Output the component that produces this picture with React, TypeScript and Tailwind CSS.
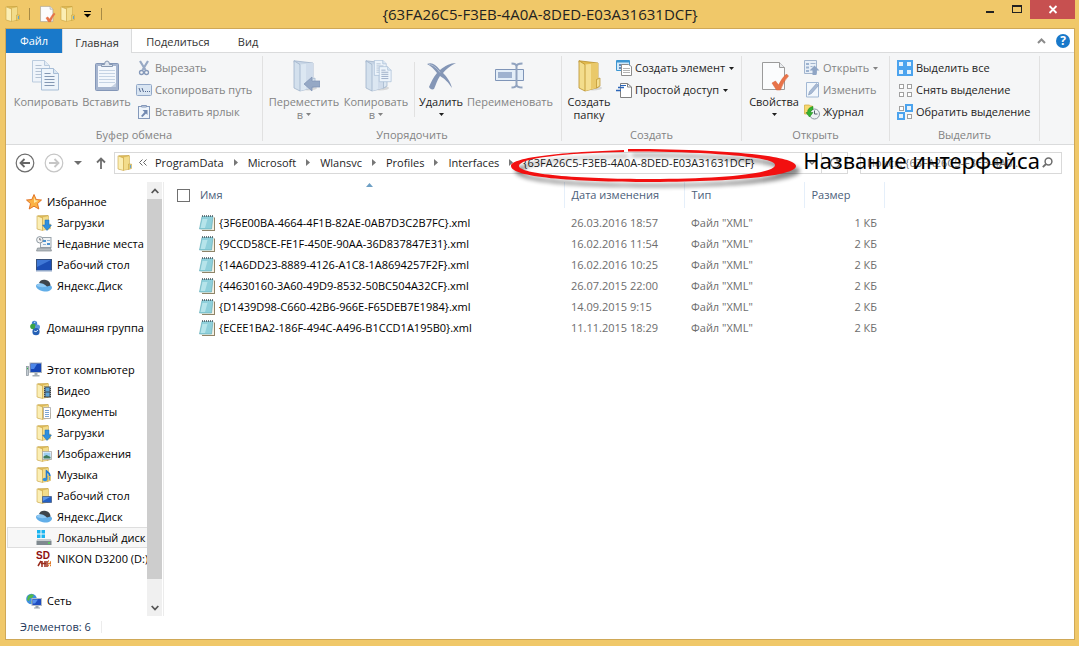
import React from 'react';

type IconProps = { className?: string };

const Folder: React.FC<IconProps & { children?: React.ReactNode }> = ({ className = 'size-4', children }) => (
  <svg viewBox="0 0 16 16" className={`shrink-0 ${className}`}>
    <path d="M2 .8 12 .5V14H2z" fill="#e3bf5c" stroke="#c09a35" strokeWidth=".6" />
    <path d="M6.5 2 12.500 .8V14l-6 1.5z" fill="#f3dc8a" stroke="#c9a443" strokeWidth=".4" />
    <path d="M1 .8 6.5 3v12.5L1 14z" fill="#fbeeb4" stroke="#c9a443" strokeWidth=".6" />
    <path d="M11.5 9H14.500v4.5l-3 1z" fill="#ecce70" stroke="#b9922c" strokeWidth=".4" />
    <path d="M13.4 10v3" stroke="#4a9bdc" strokeWidth=".9" />
    {children}
  </svg>
);

const BigFolder: React.FC<{ disabled?: boolean; children?: React.ReactNode }> = ({ disabled, children }) => {
  const c = disabled
    ? { back: '#c8d6e6', front: '#dce7f2', side: '#d3e0ed', line: '#9fb3ca' }
    : { back: '#e2bb50', front: '#f5df92', side: '#f3dd8c', line: '#b98f2a' };
  return (
    <svg viewBox="0 0 32 32" className="size-8">
      <ellipse cx="20" cy="28" rx="9" ry="2.5" fill="#000" opacity=".12" />
      <path d="M6 .8 25 3v24.5L12 31z" fill={c.back} stroke={c.line} strokeWidth=".8" />
      <path d="M12 4.5 25 3v24.5L12 31z" fill={c.front} />
      <path d="M18 4v25l7-1.5V3z" fill={c.back} opacity=".6" />
      <path d="M6 .8 12 4.5V31l-6-3z" fill={c.side} stroke={c.line} strokeWidth=".8" />
      <path d="M23.5 19.5 27 18v8l-3.5 2z" fill={c.front} stroke={c.line} strokeWidth=".7" />
      {children}
    </svg>
  );
};

const Sheet = ({ x, y, lines = '#9fb1c8' }: { x: number; y: number; lines?: string }) => (
  <g transform={`translate(${x} ${y})`}>
    <path d="M.5 .5h12l5 5V22H.5z" fill="#edf4fb" stroke="#a7bdd6" />
    <path d="M12.5 .5v5h5" fill="#dbe7f3" stroke="#a7bdd6" />
    <path d="M3.5 8.5h10M3.5 11.5h10M3.5 14.5h10M3.5 17.5h10M3.5 5.5h6" stroke={lines} />
  </g>
);

const CopyIcon = () => (
  <svg viewBox="0 0 32 32" className="size-8">
    <g opacity=".75"><Sheet x={2} y={0} /></g>
    <Sheet x={11} y={8} lines="#8397b3" />
  </svg>
);

const PasteIcon = () => (
  <svg viewBox="0 0 32 32" className="size-8">
    <rect x="4.5" y="3.5" width="23" height="27" rx="1" fill="#a6b5cf" stroke="#8497b8" />
    <path d="M7 6h18v21H7z" fill="#f3f7fc" />
    <path d="M8 10.5h16M8 13.5h16M8 16.5h16M8 19.5h16M8 22.5h16" stroke="#c5d3e4" />
    <path d="M10.5 6.5v-2h3q0-3.5 2.5-3.5t2.5 3.5h3v2z" fill="#dfe6ef" stroke="#8798b2" />
    <path d="M20 27l5-4v4z" fill="#c6d2e3" />
  </svg>
);

const DeleteIcon = () => (
  <svg viewBox="0 0 32 32" className="size-8">
    <path d="M2 4c5-2 8 0 13 6C20 6 25 3 31 3c-6 3-10 6-13 10 4 4 7 8 9 15-4-6-7-9-12-12-3 4-4 9-6 13-2 1-4 0-5-2 2-5 4-9 8-14C9 9 6 6 2 4z" fill="#8496b6" />
    <path d="M4 4.5c4 0 8 4 11 8" stroke="#b4c1d5" fill="none" />
  </svg>
);

const RenameIcon = () => (
  <svg viewBox="0 0 32 32" className="size-8">
    <path d="M1.5 9.5h28v11h-28z" fill="#e4eef8" stroke="#7f95b8" />
    <path d="M4 12h14v6H4z" fill="#9fb2cf" />
    <path d="M17.5 3.5q5 0 5 3v18q0 3-5 3M28.5 3.5q-6 0-6 3M22.5 24.5q0 3 6 3" fill="none" stroke="#91a3bf" strokeWidth="2" />
  </svg>
);

const PropertiesIcon: React.FC<IconProps> = ({ className = 'size-8' }) => (
  <svg viewBox="0 0 32 32" className={className}>
    <path d="M4.5 2.5h17l5 5v22h-22z" fill="#fbfcfd" stroke="#9b9b9b" />
    <path d="M21.5 2.5v5h5" fill="#e9ecef" stroke="#9b9b9b" />
    <path d="M14 23l3.5-2 3 4q4-8 8-11l2 2q-5 5-8 14h-4z" fill="#e8744a" stroke="#d65f35" strokeWidth=".5" />
  </svg>
);

const CutIcon = () => (
  <svg viewBox="0 0 16 16" className="size-4">
    <path d="M4 1l5.5 9M12 1L6.5 10" stroke="#98a9c4" strokeWidth="2.2" fill="none" />
    <circle cx="5.5" cy="12.5" r="2" fill="none" stroke="#8599ba" strokeWidth="1.3" />
    <circle cx="10.5" cy="12.5" r="2" fill="none" stroke="#8599ba" strokeWidth="1.3" />
  </svg>
);

const PathIcon = () => (
  <svg viewBox="0 0 16 16" className="size-4">
    <rect x=".5" y="2.5" width="15" height="11" rx="1" fill="#d9e5f2" stroke="#92a8c8" />
    <path d="M3 6l1.5 4M6 6l1.5 4" stroke="#51678e" />
    <path d="M9 9.5h1M11 9.5h1M13 9.5h1" stroke="#51678e" />
  </svg>
);

const ShortcutIcon = () => (
  <svg viewBox="0 0 16 16" className="size-4">
    <rect x="2.5" y="2.5" width="11" height="12" fill="#eff5fb" stroke="#8499bb" />
    <path d="M5.5 3V1.5h5V3z" fill="#dfe6ef" stroke="#8499bb" />
    <path d="M6.5 6h5v5L10 9.5 6.5 13 5 12l3.5-4z" fill="#7189b1" />
  </svg>
);

const NewItemIcon = () => (
  <svg viewBox="0 0 16 16" className="size-4">
    <path d="M.5 .5h13v10H.5z" fill="#d3e9f8" stroke="#3d96d2" />
    <path d="M1 1.5h12" stroke="#3d96d2" strokeWidth="2" />
    <path d="M3 5h3M3 8h2" stroke="#3d6ea8" strokeWidth="1.5" />
    <path d="M5.5 4.5h7l3 2v9h-10z" fill="#fff" stroke="#8c8c8c" />
    <path d="M7 8.5h7M7 10.5h7M7 12.5h7" stroke="#b3b3b3" />
  </svg>
);

const EasyAccessIcon = () => (
  <svg viewBox="0 0 16 16" className="size-4">
    <path d="M4.5 1.5h7l4 3.5v10.5h-11z" fill="#fff" stroke="#808080" />
    <path d="M11.5 1.5V5h4" fill="none" stroke="#808080" />
    <path d="M4 3.5h6" stroke="#2c66b8" />
    <path d="M2 5.5h6M0 8.5h5" stroke="#2c66b8" strokeWidth="1.4" />
  </svg>
);

const OpenIcon = () => (
  <svg viewBox="0 0 16 16" className="size-4">
    <path d="M.5 .5h12v13H.5z" fill="#e8eff7" stroke="#a2b5ce" />
    <path d="M2 3h3v2H2zM2 6.5h3v2H2zM2 10h3v2H2z" fill="#9db3d0" />
    <path d="M6.5 3.5h5M6.5 6.5h2" stroke="#a2b5ce" />
    <path d="M10.5 5.5l5 5h-3V15h-4v-4.5h-3z" fill="#8fa5c5" />
  </svg>
);

const EditIcon = () => (
  <svg viewBox="0 0 16 16" className="size-4">
    <path d="M2.5 .5h12V15h-12z" fill="#f2f7fc" stroke="#a2b8d4" />
    <path d="M4.5 13l1-3.5 7-8 2 2-7 8z" fill="#a8bad4" stroke="#8399bb" strokeWidth=".6" />
  </svg>
);

const HistoryIcon = () => (
  <svg viewBox="0 0 16 16" className="size-4">
    <path d="M.5 1h5l1 1h2v8h-8z" fill="#f7d970" stroke="#d1a83a" strokeWidth=".7" />
    <circle cx="10.5" cy="10" r="5" fill="#eef1f4" stroke="#8b95a0" />
    <path d="M10.5 6.5V10h3" fill="none" stroke="#57626e" />
    <path d="M9 2.5v3q-2.5 1-2.5 3H9L5.5 13 2 8.5h1.5q0-5 5.5-6z" fill="#34b233" stroke="#188018" strokeWidth=".5" />
  </svg>
);

const SelectIcon = ({ picked }: { picked: boolean[] }) => (
  <svg viewBox="0 0 16 16" className="size-4">
    {picked.map((on, i) => {
      const x = (i % 2) * 8;
      const y = i < 2 ? 0 : 8;
      return on ? (
        <g key={i}>
          <rect x={x} y={y} width="8" height="8" fill="#4ba3ee" />
          <rect x={x + 2} y={y + 2} width="4" height="4" fill="#e3f1fc" />
        </g>
      ) : (
        <rect key={i} x={x + 2.5} y={y + 2.5} width="4" height="4" fill="#fff" stroke="#a0a0a0" />
      );
    })}
  </svg>
);

const Caret: React.FC<IconProps> = ({ className = '' }) => (
  <svg viewBox="0 0 5 3" className={`inline-block h-[3px] w-[5px] ${className}`}>
    <path d="M0 0h5L2.5 3z" fill="currentColor" />
  </svg>
);

const StarIcon = () => (
  <svg viewBox="0 0 16 16" className="size-4">
    <path d="M8 .5l2.2 5 5.3 .5-4 3.6 1.3 5.4L8 12.2 3.2 15l1.3-5.4L.5 6l5.3-.5z" fill="#fbb245" stroke="#df6b1c" strokeWidth=".9" />
    <path d="M8 3l1.3 3.3 3 .4L8 9z" fill="#ffe7a6" />
  </svg>
);

const RecentIcon = () => (
  <svg viewBox="0 0 16 16" className="size-4">
    <rect x="4.5" y="1.5" width="10.5" height="10" fill="#f0f3f5" stroke="#9aa4ac" />
    <path d="M7 4h3v2H7zM11 7h3v2h-3z" fill="#4a91cf" />
    <path d="M7 8.5h3M11 4.5h3" stroke="#8eb3d4" />
    <path d="M1.5 12h13l1 3H.5z" fill="#b4babf" stroke="#82898f" strokeWidth=".7" />
    <circle cx="3.8" cy="3.8" r="3.2" fill="#f4f4f4" stroke="#8f9aa3" />
    <path d="M3.8 2v2h1.5" fill="none" stroke="#555" strokeWidth=".8" />
  </svg>
);

const DesktopIcon = () => (
  <svg viewBox="0 0 16 16" className="size-4">
    <rect x=".5" y="2.5" width="15" height="11" fill="#1c4fb5" stroke="#39527b" />
    <path d="M1 3h14L1 10z" fill="#3f78d6" />
    <path d="M0 13h16v1.5H0z" fill="#91a7c8" />
  </svg>
);

const YandexIcon = () => (
  <svg viewBox="0 0 16 16" className="size-4">
    <path d="M0 8c0-2 4-3 8-2.5s8 2 8 4-3 4.5-7.5 4S0 10.5 0 8z" fill="#62aee8" />
    <path d="M.5 7.5C1 5.500 5 5 9 6.5l2 2C9 9.500 2 9.500 .5 7.500z" fill="#8fc8f2" />
    <path d="M3 5C4 2 7 1 10 2c3 .8 4.500 3 4.500 5.500L11 8.500C9 6 5.500 5 3 5z" fill="#3d444b" />
  </svg>
);

const HomegroupIcon = () => (
  <svg viewBox="0 0 16 16" className="size-4">
    <circle cx="8.500" cy="3.5" r="2.7" fill="#3f83cf" />
    <circle cx="7" cy="6.5" r="2.8" fill="#3aa345" />
    <circle cx="11.5" cy="7" r="2.5" fill="#5b94dc" />
    <circle cx="10" cy="11.7" r="3.6" fill="#2560b5" />
    <path d="M8 2.5l1.5-.5M8 11q2 2 4-1" fill="none" stroke="#cfe4f7" />
  </svg>
);

const ComputerIcon = () => (
  <svg viewBox="0 0 16 16" className="size-4">
    <rect x=".5" y="4.5" width="2" height="9" fill="#c4ccd2" stroke="#87919a" strokeWidth=".7" />
    <path d="M1 6.5h1" stroke="#37b34a" strokeWidth="1.5" />
    <rect x="4" y="1" width="11.5" height="9.5" fill="#1647b8" stroke="#aab4bd" />
    <path d="M5 2h6L8 7H5z" fill="#4c86e9" />
    <path d="M8.5 11h3v2h2v1.5h-7V13h2z" fill="#a4adb4" />
  </svg>
);

const DiskIcon = () => (
  <svg viewBox="0 0 16 16" className="size-4">
    <path d="M1 0h3.5v3.5H1zM5.5 0H9v3.5H5.500zM1 4.5h3.5V8H1zM5.5 4.5H9V8H5.5z" fill="#18b4f0" />
    <path d="M2 9h12l1.5 2v4H.5v-4z" fill="#7f898f" />
    <path d="M2 9h12l1.5 2H.5z" fill="#c5cbce" />
    <path d="M12 13h2" stroke="#4ce04c" strokeWidth="1.5" />
  </svg>
);

const SdIcon = () => (
  <svg viewBox="0 0 16 16" className="size-4">
    <text x="0" y="8" fontSize="10" fontWeight="700" fontFamily="Liberation Sans" fill="#8e1010">SD</text>
    <path d="M2 15l3-5M6 10v6M9 10v6M5 12.5h5M11 10v6" stroke="#9a2b1b" strokeWidth="1.5" />
    <path d="M12 10h1M14 11h1M12 12.5h3M12 14.5h1M14 14.5h1" stroke="#e07a28" strokeWidth="1.3" />
  </svg>
);

const NetworkIcon = () => (
  <svg viewBox="0 0 16 16" className="size-4">
    <circle cx="5.5" cy="6" r="5.3" fill="#3f8ee0" />
    <path d="M2 3q3-3 6-1L6 5H4L3 8 1 7zM5 8l3 1-2 2z" fill="#54b947" />
    <rect x="6" y="5.5" width="9.5" height="7" fill="#1e4cc0" stroke="#b2bcc7" />
    <path d="M7 6.5h5l-3 4H7z" fill="#5590ee" />
    <path d="M9.5 13h3v1.5H14v1H8v-1h1.5z" fill="#98a2ab" />
  </svg>
);

const NotepadIcon = () => (
  <svg viewBox="0 0 16 16" className="size-4 shrink-0">
    <path d="M4 2.5h12V16H3z" fill="#8f8468" />
    <path d="M3.5 2H15v13H2z" fill="#f4f1e4" />
    <path d="M3 1.5h11L12.5 14H.5z" fill="#8fd0db" stroke="#5ba8b6" strokeWidth=".6" />
    <path d="M3.5 4h5L6 13H1.5z" fill="#c6ecf1" opacity=".7" />
    <path d="M3 1h11.5" stroke="#44535a" strokeWidth="1.5" strokeDasharray="1 1" />
  </svg>
);

interface BigButtonProps {
  icon: React.ReactNode;
  lines: string[];
  width: string;
  disabled?: boolean;
  menu?: boolean;
}

const BigButton: React.FC<BigButtonProps> = ({ icon, lines, width, disabled, menu }) => (
  <button
    type="button"
    disabled={disabled}
    className={`flex shrink-0 flex-col items-center whitespace-nowrap leading-[13px] ${width} ${disabled ? 'text-[#838383]' : 'text-[#1e1e1e]'}`}
  >
    <span className="mb-[3px] block">{icon}</span>
    <span>{lines[0]}</span>
    {(lines[1] || menu) && (
      <span className="flex h-[13px] items-center gap-[3px]">
        {lines[1]}
        {menu && <Caret />}
      </span>
    )}
  </button>
);

interface SmallButtonProps {
  icon: React.ReactNode;
  label: string;
  disabled?: boolean;
  menu?: boolean;
}

const SmallButton: React.FC<SmallButtonProps> = ({ icon, label, disabled, menu }) => (
  <button
    type="button"
    disabled={disabled}
    className={`flex h-[22px] items-center gap-[3px] whitespace-nowrap ${disabled ? 'text-[#838383]' : 'text-[#1e1e1e]'}`}
  >
    {icon}
    <span>{label}</span>
    {menu && <Caret className="ml-px" />}
  </button>
);

const Group: React.FC<{ title: string; width: string; children: React.ReactNode }> = ({ title, width, children }) => (
  <section className={`flex shrink-0 flex-col border-r border-[#e1e1e1] ${width}`}>
    <div className="flex flex-1">{children}</div>
    <h2 className="text-center leading-3 text-[#838383]">{title}</h2>
  </section>
);

const Ribbon = () => (
  <div className="border-b border-[#dadbdc] bg-[#f5f6f7]">
    <div className="flex h-[91px] overflow-hidden py-[3px]">
      <Group title="Буфер обмена" width="w-[257px]">
        <div className="flex pt-1 pl-[7px]">
          <BigButton icon={<CopyIcon />} lines={['Копировать']} width="w-[66px]" disabled />
          <BigButton icon={<PasteIcon />} lines={['Вставить']} width="w-[55px]" disabled />
        </div>
        <div className="pt-px pl-0.5">
          <SmallButton icon={<CutIcon />} label="Вырезать" disabled />
          <SmallButton icon={<PathIcon />} label="Скопировать путь" disabled />
          <SmallButton icon={<ShortcutIcon />} label="Вставить ярлык" disabled />
        </div>
      </Group>

      <Group title="Упорядочить" width="w-[299px]">
        <div className="flex pt-1 pl-[5px]">
          <BigButton
            icon={
              <BigFolder disabled>
                <path d="M16 24l8-7v4h8v6h-8v4z" fill="#95a8c5" stroke="#7f94b5" strokeWidth=".7" />
              </BigFolder>
            }
            lines={['Переместить', 'в']}
            width="w-[72px]"
            disabled
            menu
          />
          <BigButton
            icon={
              <BigFolder disabled>
                <g transform="translate(14 0) scale(.7)">
                  <Sheet x={0} y={0} />
                  <Sheet x={7} y={9} lines="#7f94b5" />
                </g>
              </BigFolder>
            }
            lines={['Копировать', 'в']}
            width="w-[72px]"
            disabled
            menu
          />
        </div>
        <div className="mt-1.5 mr-[3px] ml-0.5 h-[55px] border-l border-[#e1e1e1]" />
        <div className="flex pt-1">
          <BigButton icon={<DeleteIcon />} lines={['Удалить']} width="w-[46px]" menu />
          <BigButton icon={<RenameIcon />} lines={['Переименовать']} width="w-[92px]" disabled />
        </div>
      </Group>

      <Group title="Создать" width="w-[180px]">
        <div className="pt-1">
          <BigButton icon={<BigFolder />} lines={['Создать', 'папку']} width="w-[54px]" />
        </div>
        <div className="pt-px">
          <SmallButton icon={<NewItemIcon />} label="Создать элемент" menu />
          <SmallButton icon={<EasyAccessIcon />} label="Простой доступ" menu />
        </div>
      </Group>

      <Group title="Открыть" width="w-[148px]">
        <div className="pt-1 pl-1">
          <BigButton icon={<PropertiesIcon />} lines={['Свойства']} width="w-[56px]" menu />
        </div>
        <div className="pt-px pl-0.5">
          <SmallButton icon={<OpenIcon />} label="Открыть" disabled menu />
          <SmallButton icon={<EditIcon />} label="Изменить" disabled />
          <SmallButton icon={<HistoryIcon />} label="Журнал" />
        </div>
      </Group>

      <Group title="Выделить" width="w-[150px]">
        <div className="pt-px pl-[7px]">
          <SmallButton icon={<SelectIcon picked={[true, true, true, true]} />} label="Выделить все" />
          <SmallButton icon={<SelectIcon picked={[false, false, false, false]} />} label="Снять выделение" />
          <SmallButton icon={<SelectIcon picked={[false, true, true, false]} />} label="Обратить выделение" />
        </div>
      </Group>
    </div>
  </div>
);

const TitleBar = () => (
  <header className="grid h-7 grid-cols-[1fr_auto_1fr]">
    <div className="flex items-center">
      <Folder className="size-4" />
      <span className="ml-2 h-3 border-l border-[#a78a45]" />
      <button type="button" aria-label="Свойства" className="ml-2"><PropertiesIcon className="size-[18px]" /></button>
      <button type="button" aria-label="Создать папку" className="ml-1"><Folder className="size-4" /></button>
      <button type="button" aria-label="Настройка панели быстрого доступа" className="ml-2">
        <svg viewBox="0 0 7 7" className="h-[7px] w-[7px]"><path d="M0 .5h7" stroke="#000" /><path d="M0 3h7L3.5 6.5z" /></svg>
      </button>
      <span className="ml-2.5 h-3 border-l border-[#a78a45]" />
    </div>
    <h1 className="text-[15px] leading-7 text-[#222]">{'{63FA26C5-F3EB-4A0A-8DED-E03A31631DCF}'}</h1>
    <div className="flex items-start justify-end">
      <button type="button" aria-label="Свернуть" className="h-[19px] w-7">
        <svg viewBox="0 0 28 19" className="h-[19px] w-7"><path d="M12 11h8v2h-8z" fill="#222" /></svg>
      </button>
      <button type="button" aria-label="Развернуть" className="h-[19px] w-7">
        <svg viewBox="0 0 28 19" className="h-[19px] w-7"><path d="M10 5h10v8H10zM11 7v5h8V7z" fill="#222" fillRule="evenodd" /></svg>
      </button>
      <button type="button" aria-label="Закрыть" className="h-[19px] w-[45px] bg-[#c75050]">
        <svg viewBox="0 0 45 19" className="h-[19px] w-[45px]"><path d="M19.5 6l7 7M26.5 6l-7 7" stroke="#fff" strokeWidth="1.8" /></svg>
      </button>
    </div>
  </header>
);

const Tabs = () => (
  <nav className="flex h-6 items-stretch bg-white text-[#333]">
    <button type="button" className="w-14 bg-[#1979ca] text-white">Файл</button>
    <button type="button" className="-mb-px w-[70px] border-x border-[#dadbdc] bg-[#f5f6f7] pt-0.5">Главная</button>
    <button type="button" className="w-[92px] border-b border-[#dadbdc] pt-0.5">Поделиться</button>
    <button type="button" className="w-12 border-b border-[#dadbdc] pt-0.5">Вид</button>
    <div className="flex flex-1 items-center justify-end gap-2.5 border-b border-[#dadbdc] pr-1">
      <button type="button" aria-label="Свернуть ленту">
        <svg viewBox="0 0 9 6" className="h-1.5 w-[9px]"><path d="M1 5l3.5-3.5L8 5" fill="none" stroke="#8b8b8b" strokeWidth="2" /></svg>
      </button>
      <button type="button" aria-label="Справка" className="size-[14px] rounded-full bg-[#1979ca] text-xs leading-[14px] font-bold text-white">?</button>
    </div>
  </nav>
);

const ring =
  'M113 1C55 3 0 8 0 17c0 11 60 16 140 16 82 0 145-6 145-16C285 7 215 0 117 0v2.5c78 0 147 5 147 13.5 0 9-56 14-124 14C66 30 8 25 8 17 8 9 55 4 113 3z';

const Marker = () => (
  <svg viewBox="0 0 300 44" className="pointer-events-none absolute -top-1.5 -left-3 h-11 w-[300px] max-w-none overflow-visible">
    <defs>
      <filter id="soft" x="-10%" y="-30%" width="120%" height="180%">
        <feGaussianBlur stdDeviation="2" />
      </filter>
    </defs>
    <path d={ring} fill="#000" opacity=".45" transform="translate(4 5)" filter="url(#soft)" />
    <path d={ring} fill="#f21010" />
  </svg>
);

const crumbs = ['ProgramData', 'Microsoft', 'Wlansvc', 'Profiles', 'Interfaces'];

const AddressRow = () => (
  <div className="flex h-[37px] items-center pr-3 pb-0.5 text-[#1e1e1e]">
    <div className="ml-[9px] flex items-center">
      <button type="button" aria-label="Назад">
        <svg viewBox="0 0 20 20" className="size-5"><circle cx="10" cy="10" r="8.8" fill="#fff" stroke="#6e6e6e" strokeWidth="1.2" /><path d="M15 10H6M9.5 6l-4 4 4 4" fill="none" stroke="#666" strokeWidth="1.8" /></svg>
      </button>
      <button type="button" aria-label="Вперед" disabled className="ml-[9px]">
        <svg viewBox="0 0 20 20" className="size-5"><circle cx="10" cy="10" r="8.8" fill="#fff" stroke="#c6c6c6" strokeWidth="1.2" /><path d="M5 10h9M10.5 6l4 4-4 4" fill="none" stroke="#c6c6c6" strokeWidth="1.8" /></svg>
      </button>
      <button type="button" aria-label="Последние расположения" className="ml-2.5 flex">
        <svg viewBox="0 0 8 4" className="h-1 w-2"><path d="M0 0h8L4 4z" fill="#6e6e6e" /></svg>
      </button>
      <button type="button" aria-label="Вверх" className="ml-3.5">
        <svg viewBox="0 0 10 12" className="h-3 w-2.5"><path d="M5 12V1.5M1 5.5l4-4 4 4" fill="none" stroke="#6e6e6e" strokeWidth="1.8" /></svg>
      </button>
    </div>
    <div className="ml-2 flex h-[22px] flex-1 items-center border border-[#d9d9d9] whitespace-nowrap">
      <Folder className="ml-0.5 size-4" />
      <svg viewBox="0 0 8 7" className="ml-1.5 h-[7px] w-2"><path d="M3.5 .5l-3 3 3 3M7.5 .5l-3 3 3 3" fill="none" stroke="#666" /></svg>
      {crumbs.map((name) => (
        <React.Fragment key={name}>
          <a href="#" className="ml-2">{name}</a>
          <svg viewBox="0 0 4 7" className="mr-0.5 ml-2.5 h-[7px] w-1"><path d="M0 0l4 3.5L0 7z" fill="#777" /></svg>
        </React.Fragment>
      ))}
      <div className="relative ml-2">
        <a href="#">{'{63FA26C5-F3EB-4A0A-8DED-E03A31631DCF}'}</a>
        <Marker />
        <span className="pointer-events-none absolute -top-2 left-[280px] z-10 font-['Noto_Sans',sans-serif] text-[22px] leading-[26px] text-black">
          Название интерфейса
        </span>
      </div>
      <div className="ml-auto flex h-full items-center">
        <button type="button" aria-label="Предыдущие расположения" className="flex w-[18px] justify-center">
          <svg viewBox="0 0 8 5" className="h-[5px] w-2"><path d="M.5 .5L4 4 7.5 .5" fill="none" stroke="#777" strokeWidth="1.4" /></svg>
        </button>
        <button type="button" aria-label="Обновить" className="flex h-full w-[26px] items-center justify-center border-l border-[#d9d9d9]">
          <svg viewBox="0 0 12 12" className="size-3"><path d="M10.5 6A4.5 4.5 0 1 1 8.5 2.2M8 0v3.5h3.5" fill="none" stroke="#777" strokeWidth="1.4" /></svg>
        </button>
      </div>
    </div>
    <label className="ml-3 flex h-[22px] w-[202px] shrink-0 items-center border border-[#d9d9d9] pr-2 pl-1.5">
      <input type="search" aria-label="Поиск" placeholder="Поиск: {63FA26C5-F3EB-4A0..." className="min-w-0 flex-1 outline-none placeholder:text-[#767676]" />
      <svg viewBox="0 0 11 11" className="size-[11px] shrink-0"><circle cx="6.5" cy="4.5" r="3.4" fill="none" stroke="#6e6e6e" strokeWidth="1.5" /><path d="M4 7L.8 10.2" stroke="#6e6e6e" strokeWidth="1.8" /></svg>
    </label>
  </div>
);

interface Place {
  label: string;
  icon: React.ReactNode;
  selected?: boolean;
}

const favorites: Place[] = [
  { label: 'Загрузки', icon: <Folder><path d="M9 5h4v5h2.5L11 15.5 6.5 10H9z" fill="#2f8fdd" stroke="#1b6cb5" strokeWidth=".5" /></Folder> },
  { label: 'Недавние места', icon: <RecentIcon /> },
  { label: 'Рабочий стол', icon: <DesktopIcon /> },
  { label: 'Яндекс.Диск', icon: <YandexIcon /> },
];

const computer: Place[] = [
  { label: 'Видео', icon: <Folder><path d="M8 3.5h7v11H8z" fill="#3b4147" /><path d="M9.5 4.5h4v4h-4zM9.5 9.5h4v4h-4z" fill="#5da4d8" /><path d="M8.7 4v10M14.4 4v10" stroke="#ddd" strokeWidth=".7" strokeDasharray="1 1" /></Folder> },
  { label: 'Документы', icon: <Folder><path d="M7.5 3.5h7v11h-7z" fill="#fff" stroke="#9b9b9b" strokeWidth=".7" /><path d="M9 6.5h4M9 8.5h4M9 10.5h4M9 12.5h4" stroke="#6a9bd1" strokeWidth=".9" /></Folder> },
  { label: 'Загрузки', icon: favorites[0].icon },
  { label: 'Изображения', icon: <Folder><path d="M6.5 5.5h9v8h-9z" fill="#fff" stroke="#9b9b9b" strokeWidth=".7" /><path d="M7.5 6.5h7v6h-7z" fill="#9ccdf0" /><path d="M7.5 12.5v-2l3-1.5 4 2v1.5z" fill="#3f7b5c" /></Folder> },
  { label: 'Музыка', icon: <Folder><path d="M10.5 12V4q3 2 3.5 5" fill="none" stroke="#1f7ad0" strokeWidth="1.6" /><ellipse cx="9" cy="12.5" rx="2.3" ry="1.8" fill="#2f8fdd" /></Folder> },
  { label: 'Рабочий стол', icon: <Folder><path d="M6.5 8.5h9v6h-9z" fill="#2460c4" stroke="#4b6288" strokeWidth=".8" /><path d="M7 9h7l-7 4z" fill="#5d97ea" /></Folder> },
  { label: 'Яндекс.Диск', icon: <YandexIcon /> },
  { label: 'Локальный диск', icon: <DiskIcon />, selected: true },
  { label: 'NIKON D3200 (D:)', icon: <SdIcon /> },
];

const PlaceGroup: React.FC<{ root: Place; items?: Place[] }> = ({ root, items = [] }) => (
  <ul className="mb-[21px]">
    <li>
      <a href="#" className="flex h-[21px] items-center gap-[5px] pl-5">
        <span className="shrink-0">{root.icon}</span>
        {root.label}
      </a>
    </li>
    {items.map((item) => (
      <li key={item.label}>
        <a
          href="#"
          className={`ml-px flex h-[21px] items-center gap-[5px] pl-7 ${item.selected ? 'border border-r-0 border-[#dedede] bg-[#f7f7f7]' : 'border-x border-transparent'}`}
        >
          <span className="shrink-0">{item.icon}</span>
          {item.label}
        </a>
      </li>
    ))}
  </ul>
);

const Sidebar = () => (
  <aside className="flex w-[158px] shrink-0 border-r border-[#ececec] whitespace-nowrap text-black">
    <nav className="w-[141px] overflow-hidden pt-[9px]">
      <PlaceGroup root={{ label: 'Избранное', icon: <StarIcon /> }} items={favorites} />
      <PlaceGroup root={{ label: 'Домашняя группа', icon: <HomegroupIcon /> }} />
      <PlaceGroup root={{ label: 'Этот компьютер', icon: <ComputerIcon /> }} items={computer} />
      <a href="#" className="flex h-[21px] items-center gap-[5px] pl-5">
        <NetworkIcon />
        Сеть
      </a>
    </nav>
    <div className="flex w-[15px] flex-col bg-[#f0f0f0]">
      <button type="button" aria-label="Прокрутить вверх" className="flex h-[17px] items-center justify-center">
        <svg viewBox="0 0 8 6" className="h-1.5 w-2"><path d="M.7 5L4 1.5 7.3 5" fill="none" stroke="#555" strokeWidth="1.8" /></svg>
      </button>
      <div className="mb-5 flex-1 bg-[#cdcdcd]" />
      <button type="button" aria-label="Прокрутить вниз" className="flex h-[17px] items-center justify-center">
        <svg viewBox="0 0 8 6" className="h-1.5 w-2"><path d="M.7 1L4 4.5 7.3 1" fill="none" stroke="#555" strokeWidth="1.8" /></svg>
      </button>
    </div>
  </aside>
);

const files = [
  { name: '{3F6E00BA-4664-4F1B-82AE-0AB7D3C2B7FC}.xml', date: '26.03.2016 18:57', size: '1 КБ' },
  { name: '{9CCD58CE-FE1F-450E-90AA-36D837847E31}.xml', date: '16.02.2016 11:54', size: '2 КБ' },
  { name: '{14A6DD23-8889-4126-A1C8-1A8694257F2F}.xml', date: '16.02.2016 10:25', size: '2 КБ' },
  { name: '{44630160-3A60-49D9-8532-50BC504A32CF}.xml', date: '26.07.2015 22:00', size: '2 КБ' },
  { name: '{D1439D98-C660-42B6-966E-F65DEB7E1984}.xml', date: '14.09.2015 9:15', size: '2 КБ' },
  { name: '{ECEE1BA2-186F-494C-A496-B1CCD1A195B0}.xml', date: '11.11.2015 18:29', size: '2 КБ' },
];

const FileTable = () => (
  <main className="flex-1 overflow-hidden">
    <table className="w-[720px] table-fixed border-collapse text-left whitespace-nowrap text-[#6d6d6d]">
      <colgroup>
        <col className="w-[400px]" />
        <col className="w-[120px]" />
        <col className="w-[120px]" />
        <col className="w-20" />
      </colgroup>
      <thead className="text-[#4c607a]">
        <tr className="h-[26px]">
          <th className="relative border-r border-[#e5effa] p-0 font-normal">
            <span className="flex items-center gap-2.5 pl-[13px]">
              <input type="checkbox" aria-label="Выбрать все" className="size-[13px] appearance-none border border-[#707070] bg-white" />
              Имя
            </span>
            <svg viewBox="0 0 7 4" className="absolute top-px left-[202px] h-1 w-[7px]"><path d="M0 4l3.5-4L7 4z" fill="#6d9fc4" /></svg>
          </th>
          <th className="border-r border-[#e5effa] p-0 pl-[7px] font-normal">Дата изменения</th>
          <th className="border-r border-[#e5effa] p-0 pl-[7px] font-normal">Тип</th>
          <th className="border-r border-[#e5effa] p-0 pl-[7px] font-normal">Размер</th>
        </tr>
      </thead>
      <tbody>
        <tr className="h-1" aria-hidden="true" />
        {files.map((file) => (
          <tr key={file.name} className="h-[21px]">
            <td className="p-0">
              <span className="flex items-center gap-1 pl-[35px] text-black">
                <NotepadIcon />
                {file.name}
              </span>
            </td>
            <td className="p-0 pl-[7px]">{file.date}</td>
            <td className="p-0 pl-[7px]">Файл "XML"</td>
            <td className="p-0 pr-[7px] text-right">{file.size}</td>
          </tr>
        ))}
      </tbody>
    </table>
  </main>
);

export default function App() {
  return (
    <div className="flex min-h-screen flex-col bg-[#f0c869] pr-1 pb-1.5 pl-[5px] font-['Open_Sans','Noto_Sans',sans-serif] text-[11px] leading-4">
      <TitleBar />
      <div className="flex flex-1 flex-col border border-[#cfa857] bg-white">
        <Tabs />
        <Ribbon />
        <AddressRow />
        <div className="flex flex-1">
          <Sidebar />
          <FileTable />
        </div>
        <footer className="flex h-[23px] items-center pb-px pl-3.5 text-[#1e395b]">
          <span className="border-r border-[#ececec] pr-2.5 leading-3">Элементов: 6</span>
        </footer>
      </div>
    </div>
  );
}
